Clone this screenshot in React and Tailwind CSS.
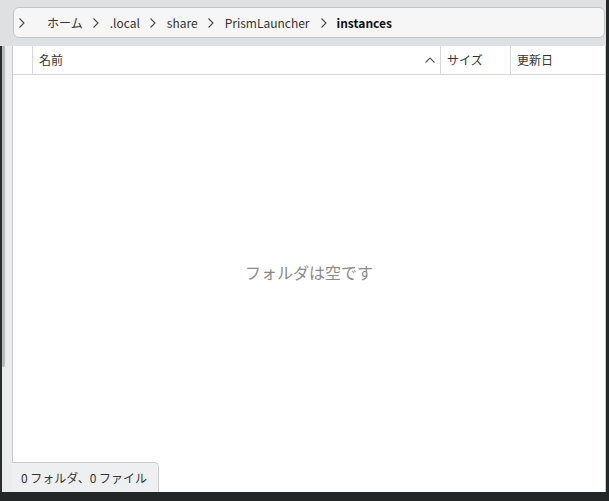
import React from 'react'

const font = { fontFamily: '"Noto Sans CJK JP", "Noto Sans", sans-serif' }

const Chevron = ({ className = '' }) => (
  <svg className={className} width="8" height="12" viewBox="0 0 8 12" fill="none">
    <polyline points="1.5,1.5 6,6 1.5,10.5" stroke="#4a4a4a" strokeWidth="1.1" />
  </svg>
)

const crumbs = ['.local', 'share', 'PrismLauncher']

export default function App() {
  return (
    <div className="w-[609px] h-[501px] bg-[#232727] overflow-hidden whitespace-nowrap" style={font}>
      <div className="w-[606px] h-[492px] bg-[#dfe0e1] flex flex-col">
        {/* breadcrumb bar */}
        <div className="h-[46px] shrink-0 pl-[13px] pr-[1px] pt-[7px]">
          <div className="h-[31px] bg-[#f6f6f6] border border-[#c4c4c4] rounded-[6px] flex items-center text-[12px] text-[#333] pt-[1px]">
            <Chevron className="ml-[4px]" />
            <span className="ml-[21px]">ホーム</span>
            {crumbs.map((c) => (
              <React.Fragment key={c}>
                <Chevron className="ml-[9px]" />
                <span className="ml-[10px]">{c}</span>
              </React.Fragment>
            ))}
            <Chevron className="ml-[10px]" />
            <span className="ml-[9px] font-bold text-[#111]">instances</span>
          </div>
        </div>

        <div className="flex-1 flex min-h-0">
          {/* left edge */}
          <div className="w-[12px] flex shrink-0">
            <div className="w-[2px] bg-[#2b2e2e]" />
            <div className="w-[3px] flex flex-col">
              <div className="h-[321px] bg-[#b9bbbb] rounded-b-[2px]" />
              <div className="flex-1 bg-[#e9eaea]" />
            </div>
            <div className="flex-1 bg-[#ebeced]" />
          </div>

          {/* file view */}
          <div className="flex-1 bg-white border-l border-r border-[#cbcbcb] flex flex-col">
            <div className="h-[29px] shrink-0 flex border-b border-[#d8d8d8] text-[12px] text-[#333]">
              <div className="w-[20px] border-r border-[#d8d8d8]" />
              <div className="w-[408px] border-r border-[#d8d8d8] flex items-center pl-[6px] pr-[4px]">
                <span className="flex-1">名前</span>
                <svg width="12" height="8" viewBox="0 0 12 8" fill="none">
                  <polyline points="1.5,6.5 6,2 10.5,6.5" stroke="#555" strokeWidth="1.1" />
                </svg>
              </div>
              <div className="w-[70px] border-r border-[#d8d8d8] flex items-center pl-[6px]">サイズ</div>
              <div className="flex-1 flex items-center pl-[6px]">更新日</div>
            </div>
            <div className="flex-1 flex items-center justify-center pt-[6px]">
              <span className="text-[16px] text-[#8a8a8a]">フォルダは空です</span>
            </div>
            <div className="h-[30px] shrink-0 flex">
              <div className="w-[147px] -ml-[1px] bg-[#eeeff0] border-t border-r border-[#cdcdcd] rounded-tr-[5px] flex items-center pl-[9px] text-[12px] text-[#333]">
                0 フォルダ、0 ファイル
              </div>
            </div>
          </div>
        </div>
      </div>
    </div>
  )
}
